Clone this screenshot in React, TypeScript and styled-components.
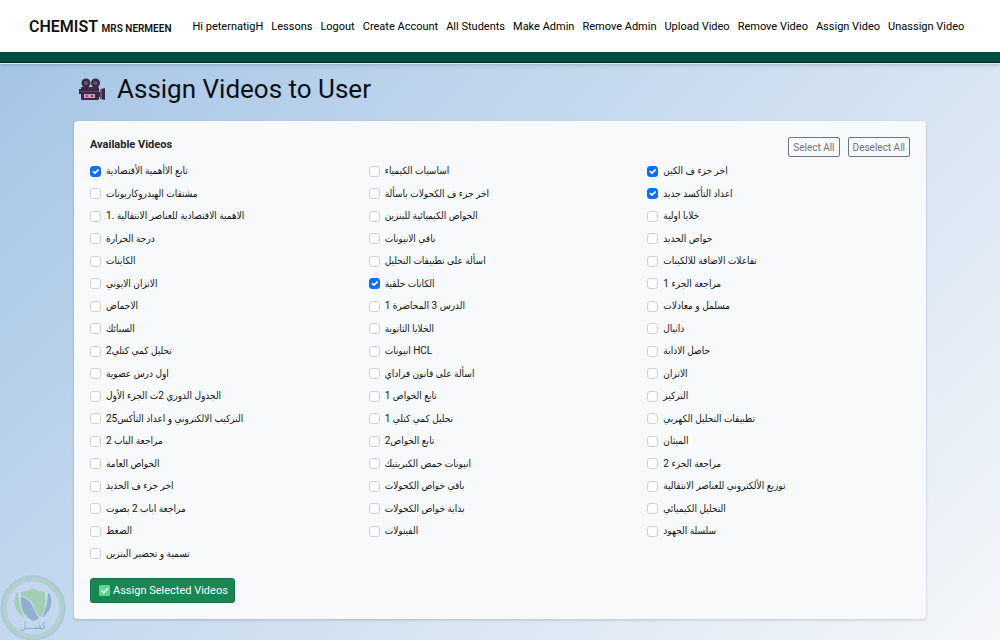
import React from "react";
import styled, { createGlobalStyle } from "styled-components";

const GlobalStyle = createGlobalStyle`
  *, *::before, *::after { box-sizing: border-box; }
  body {
    margin: 0;
    font-family: Roboto, "DejaVu Sans Condensed", "DejaVu Sans", sans-serif;
    font-size: 11px;
    color: #212529;
  }
`;

const Page = styled.div`
  min-height: 100vh;
  display: flex;
  flex-direction: column;
  background: linear-gradient(135deg, #a2c3e5 0%, #f5f7fa 100%);
`;

const Header = styled.header`
  display: flex;
  align-items: center;
  gap: 21px;
  height: 62px;
  padding: 0 29px;
  background: #fff;
  border-bottom: 10px solid #004d40;
  box-shadow: 0 1px 0 #02251f, 0 2px 0 #e3ecf5, 0 3px 4px rgba(0, 0, 0, 0.2);
`;

const Brand = styled.a`
  color: #111;
  font-size: 16px;
  font-weight: 600;
  text-decoration: none;
  white-space: nowrap;

  small { font-size: 10px; }
`;

const Nav = styled.nav`
  display: flex;
  gap: 8px;
`;

const NavLink = styled.a`
  color: #000;
  text-decoration: none;
  white-space: nowrap;
`;

const Main = styled.main`
  padding: 11px 74px 21px;
`;

const Title = styled.h1`
  display: flex;
  align-items: center;
  gap: 12px;
  margin: 0 0 16px;
  padding-left: 5px;
  font-size: 26px;
  line-height: 32px;
  font-weight: 400;
  color: #0b0f14;
`;

const Card = styled.form`
  padding: 16px;
  background: #f8f9fb;
  border-radius: 4px;
  box-shadow: 0 1px 3px rgba(0, 0, 0, 0.18);
`;

const CardHead = styled.div`
  display: flex;
  justify-content: space-between;
  height: 23px;
`;

const CardTitle = styled.h2`
  margin: 0;
  font-size: 11px;
  line-height: 16px;
  font-weight: 700;
`;

const Actions = styled.div`
  display: flex;
  gap: 8px;
`;

const OutlineButton = styled.button`
  height: 20px;
  padding: 0 4px;
  font: inherit;
  font-size: 10px;
  color: #6c757d;
  background: transparent;
  border: 1px solid #6c757d;
  border-radius: 2px;
`;

const VideoGrid = styled.div`
  display: grid;
  grid-template-columns: repeat(3, 1fr);
  grid-auto-rows: 22px 23px;
  column-gap: 16px;
`;

const VideoLabel = styled.label`
  display: flex;
  align-items: center;
  gap: 5px;
  font-size: 10px;
  line-height: 16px;
  color: #111418;
  white-space: nowrap;
`;

const Checkbox = styled.input`
  appearance: none;
  flex: none;
  width: 11px;
  height: 11px;
  margin: 0;
  background: #fff;
  border: 1px solid #ced2d6;
  border-radius: 3px;

  &:checked {
    border-color: #0d6efd;
    background: #0d6efd url("data:image/svg+xml,%3Csvg xmlns='http://www.w3.org/2000/svg' viewBox='0 0 20 20'%3E%3Cpath fill='none' stroke='%23fff' stroke-linecap='round' stroke-linejoin='round' stroke-width='3' d='m6 10 3 3 6-6'/%3E%3C/svg%3E") center / 11px;
  }
`;

const SubmitButton = styled.button`
  display: flex;
  align-items: center;
  gap: 3px;
  height: 25px;
  margin-top: 13px;
  padding: 0 6px 0 8px;
  font: inherit;
  color: #fff;
  background: #198754;
  border: 1px solid #157347;
  border-radius: 3px;
`;

const Watermark = styled.svg`
  position: fixed;
  left: 0;
  bottom: 0;
  opacity: 0.7;
`;

const links = [
  "Hi peternatigH", "Lessons", "Logout", "Create Account", "All Students", "Make Admin",
  "Remove Admin", "Upload Video", "Remove Video", "Assign Video", "Unassign Video",
];

const videos = [
  "تابع الاأهمية الأقتصادية", "اساسيات الكيمياء", "اخر جزء ف الكين",
  "مشتقات الهيدروكاربونات", "اخر جزء ف الكحولات باسألة", "اعداد التأكسد جديد",
  "1. الاهمية الاقتصادية للعناصر الانتقالية", "الخواص الكيميائية للبنزين", "خلايا اولية",
  "درجة الحرارة", "باقي الانيونات", "خواص الحديد",
  "الكاينات", "اسألة على تطبيقات التحليل", "تفاعلات الاضافة للالكينات",
  "الاتزان الايوني", "الكانات حلقية", "مراجعة الجزء 1",
  "الاحماض", "الدرس 3 المحاضرة 1", "مسلمل و معادلات",
  "السبائك", "الخلايا الثانوية", "دانيال",
  "تحليل كمي كتلي2", "انيونات HCL", "حاصل الاذابة",
  "اول درس عضوية", "اسألة على قانون فراداي", "الاتزان",
  "الجدول الدوري 2ث الجزء الأول", "تابع الخواص 1", "التركيز",
  "التركيب الالكتروني و اعداد التأكس25", "تحليل كمي كتلي 1", "تطبيقات التحليل الكهربي",
  "مراجعة الباب 2", "تابع الخواص2", "الميثان",
  "الخواص العامة", "انيونات حمض الكبريتيك", "مراجعة الجزء 2",
  "اخر جزء ف الحديد", "باقي خواص الكحولات", "توزيع الألكتروني للعناصر الانتقالية",
  "مراجعة اباب 2 بصوت", "بداية خواص الكحولات", "التحليل الكيميائي",
  "الضغط", "الفينولات", "سلسلة الجهود",
  "تسمية و تحضير البنزين",
];

const initiallySelected = [0, 2, 5, 16];

const CameraIcon = () => (
  <svg width="26" height="24" viewBox="0 0 26 24" aria-hidden="true">
    <circle cx="7" cy="6" r="4.5" fill="#3a2b45" />
    <circle cx="16.5" cy="6" r="4.5" fill="#3a2b45" />
    <circle cx="7" cy="6" r="2" fill="#65536f" />
    <circle cx="16.5" cy="6" r="2" fill="#65536f" />
    <path d="M0 12h3v5H0zM2 11q0-1 1-1h16q1 0 1 1v4l2-1V12l4-1v12l-4-1v-2h-2v2q0 1-1 1H3q-1 0-1-1z" fill="#3a2b45" />
    <path d="M2 14h18v1H2z" fill="#584762" />
    <path d="M21 12h2v10h-2z" fill="#6d4f82" />
    <path d="M5 17h11v4H5z" fill="#bfa6bd" />
    <circle cx="8" cy="19" r="1.5" fill="#e0359a" />
    <circle cx="13" cy="19" r="1.3" fill="#8b4058" />
  </svg>
);

const TickIcon = () => (
  <svg width="11" height="11" viewBox="0 0 11 11" aria-hidden="true">
    <rect width="11" height="11" rx="1" fill="#5bd78e" />
    <path d="M2.5 5.5l2.3 2.4L9 3" fill="none" stroke="#fff" strokeWidth="1.5" />
  </svg>
);

export default function App() {
  const [selected, setSelected] = React.useState(() => new Set(initiallySelected));

  const toggle = (index: number) => {
    const next = new Set(selected);
    if (!next.delete(index)) next.add(index);
    setSelected(next);
  };

  return (
    <Page>
      <GlobalStyle />
      <Header>
        <Brand href="#">CHEMIST <small>MRS NERMEEN</small></Brand>
        <Nav>
          {links.map((link) => <NavLink key={link} href="#">{link}</NavLink>)}
        </Nav>
      </Header>
      <Main>
        <Title><CameraIcon />Assign Videos to User</Title>
        <Card onSubmit={(event) => event.preventDefault()}>
          <CardHead>
            <CardTitle>Available Videos</CardTitle>
            <Actions>
              <OutlineButton type="button" onClick={() => setSelected(new Set(videos.keys()))}>Select All</OutlineButton>
              <OutlineButton type="button" onClick={() => setSelected(new Set())}>Deselect All</OutlineButton>
            </Actions>
          </CardHead>
          <VideoGrid>
            {videos.map((video, index) => (
              <VideoLabel key={video}>
                <Checkbox type="checkbox" checked={selected.has(index)} onChange={() => toggle(index)} />
                <span>{video}</span>
              </VideoLabel>
            ))}
          </VideoGrid>
          <SubmitButton type="submit"><TickIcon />Assign Selected Videos</SubmitButton>
        </Card>
      </Main>
      <Watermark width="66" height="66" viewBox="0 0 66 66" aria-hidden="true">
        <circle cx="33" cy="34" r="31.5" fill="#c3d8f0" stroke="#a3bbd8" strokeWidth="2" />
        <circle cx="33" cy="34" r="29" fill="none" stroke="#a5d3ae" strokeWidth="3" />
        <circle cx="33" cy="34" r="27" fill="none" stroke="#a9c0dc" strokeWidth="1" />
        <path d="M21 18q6 0 12-4q6 4 12 4v10q0 11-5 15q-3-3-6-11q-4-9-13-10z" fill="#93cc9c" />
        <path d="M21 23q8 1 12 10q3 7 6 11q-3 2-6 3q-12-6-12-19z" fill="#7f9ec2" />
        <path d="M17 19q-6 13 6 24q-5-11-6-24z" fill="#93cc9c" stroke="#93cc9c" />
        <path d="M49 19q6 13-6 24q5-11 6-24z" fill="#7f9ec2" stroke="#7f9ec2" />
        <text x="33" y="55" textAnchor="middle" fontSize="10" fill="#7893b4">كفيـــل</text>
      </Watermark>
    </Page>
  );
}
